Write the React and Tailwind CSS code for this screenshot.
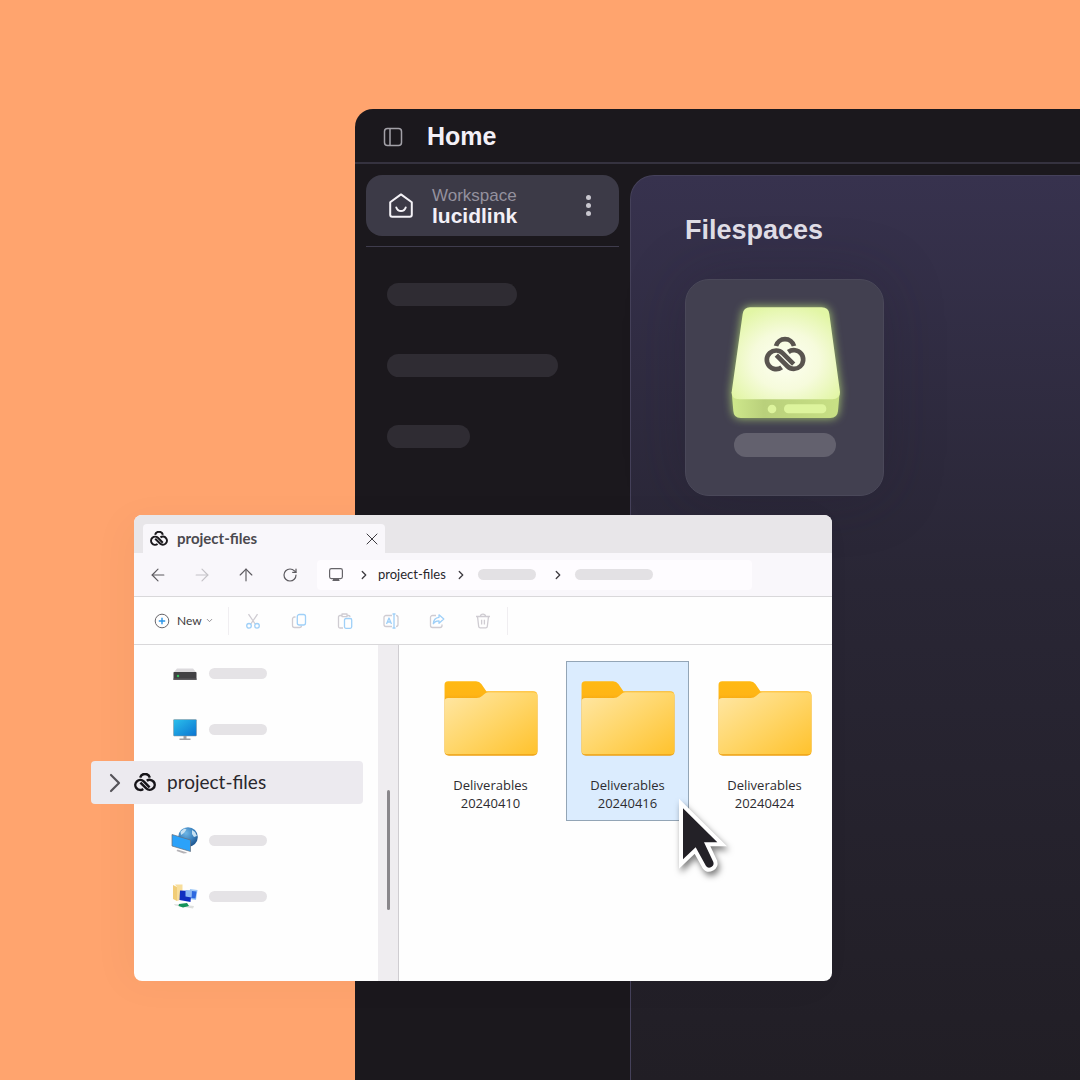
import React from "react";
import { ArrowLeft, ArrowRight, ArrowUp, ChevronDown, ChevronRight, RotateCw, X } from "lucide-react";

const FOLDERS = [
  { name: "Deliverables", date: "20240410" },
  { name: "Deliverables", date: "20240416", selected: true },
  { name: "Deliverables", date: "20240424" },
];

function LogoPaths() {
  return (
    <>
      <path d="M34 25A28 28 0 0 1 88 25" />
      <path d="M51 89A28 28 0 1 1 53.8 46.2L87 79.4" />
      <path d="M71 43A28 28 0 1 1 68.2 85.8L35 52.6" />
    </>
  );
}

function LucidLogo({ className }) {
  return (
    <svg viewBox="-1 -1 124 103" className={className} fill="none" stroke="currentColor" strokeWidth="14" aria-hidden="true">
      <LogoPaths />
    </svg>
  );
}

function PanelIcon() {
  return (
    <svg viewBox="0 0 20 20" className="size-5" fill="none" stroke="#a3a1a8" strokeWidth="1.5" aria-hidden="true">
      <rect x="1.5" y="1.5" width="17" height="17" rx="3" />
      <path d="M7 1.5v17" />
    </svg>
  );
}

function HomeIcon() {
  return (
    <svg viewBox="0 0 24 26" className="h-[26px] w-6" fill="none" stroke="#f4f2f7" strokeWidth="2" strokeLinecap="round" strokeLinejoin="round" aria-hidden="true">
      <path d="M1.2 9.2 12 1.4l10.800 7.800v12.600a2 2 0 0 1-2 2H3.200a2 2 0 0 1-2-2Z" />
      <path d="M7.300 14.500c.8 2.400 2.500 3.500 4.700 3.500s3.900-1.100 4.700-3.500" />
    </svg>
  );
}

function DriveArt() {
  return (
    <svg viewBox="0 0 360 360" className="size-[120px] overflow-visible drop-shadow-[0_0_5px_#c3ee7acc]" aria-hidden="true">
      <defs>
        <radialGradient id="driveTop" cx="50%" cy="58%" r="62%">
          <stop offset="0" stopColor="#fdfff2" />
          <stop offset="0.5" stopColor="#f6fbdc" />
          <stop offset="1" stopColor="#e2f6a5" />
        </radialGradient>
        <linearGradient id="driveFront" x1="0" x2="1" y1="0" y2="0">
          <stop offset="0" stopColor="#cfe88c" />
          <stop offset="0.3" stopColor="#b9d07b" />
          <stop offset="1" stopColor="#c8e085" />
        </linearGradient>
      </defs>
      <path d="M20 270H344L339 327Q337 348 316 348H47Q26 348 25 327Z" fill="url(#driveFront)" />
      <path d="M75 16H290Q311 16 313 36L345 270Q345 292 322 292H43Q19 292 20 270L53 36Q56 16 75 16Z" fill="url(#driveTop)" />
      <circle cx="141" cy="321" r="13" fill="#ddf49d" />
      <rect x="177" y="307" width="127" height="27" rx="13" fill="#ddf49d" />
      <g transform="translate(119 107)" fill="none" stroke="#59544f" strokeWidth="14">
        <LogoPaths />
      </g>
    </svg>
  );
}

function FolderArt() {
  return (
    <svg viewBox="0 0 282 226" className="h-[75px] w-[94px]" aria-hidden="true">
      <defs>
        <linearGradient id="folderFront" x1="0" y1="0" x2="1" y2="1">
          <stop offset="0" stopColor="#ffe7a6" />
          <stop offset="0.5" stopColor="#ffd669" />
          <stop offset="1" stopColor="#ffc22d" />
        </linearGradient>
        <linearGradient id="folderTab" x1="0" y1="0" x2="0" y2="1">
          <stop offset="0" stopColor="#ffb912" />
          <stop offset="0.18" stopColor="#ffb515" />
          <stop offset="0.3" stopColor="#eda012" />
        </linearGradient>
      </defs>
      <path d="M12 1H96Q106 1 112 9L127 31H268Q281 31 281 44V212Q281 225 268 225H14Q1 225 1 212V12Q1 1 12 1Z" fill="url(#folderTab)" />
      <path d="M1 62Q1 51 12 51H98Q108 51 114 45L124 37Q128 34 134 34H270Q281 34 281 45V210Q281 221 270 221H12Q1 221 1 210Z" fill="url(#folderFront)" />
    </svg>
  );
}

function CursorArt() {
  return (
    <svg viewBox="0 0 180 240" className="h-20 w-[60px] overflow-visible drop-shadow-[2px_4px_3px_#00000080]" aria-hidden="true">
      <path
        d="M24 40 127 142H87L115 201Q118 211 109 216 99 221 93 213L62 157 24 193Z"
        fill="#232127"
        stroke="#fff"
        strokeWidth="24"
        paintOrder="stroke"
      />
    </svg>
  );
}

function ComputerIcon() {
  return (
    <svg viewBox="0 0 16 16" className="size-4" fill="none" stroke="#666469" strokeWidth="1.200" aria-hidden="true">
      <rect x="1.600" y="1.600" width="12.800" height="10" rx="1.800" />
      <path d="M4.500 13.500h7M5 12.500h6" />
    </svg>
  );
}

function NewIcon() {
  return (
    <svg viewBox="0 0 16 16" className="size-4" fill="none" aria-hidden="true">
      <circle cx="8" cy="8" r="6.800" stroke="#68666b" />
      <path d="M8 4.800v6.400M4.800 8h6.400" stroke="#2b95e8" strokeWidth="1.400" />
    </svg>
  );
}

const TOOLS = [
  {
    label: "Cut",
    art: (
      <>
        <path d="M3.500 1.200 10.200 11M12.500 1.200 5.800 11" stroke="#cfccd2" />
        <circle cx="4" cy="12.800" r="2.300" stroke="#9fd0f8" />
        <circle cx="12" cy="12.800" r="2.300" stroke="#9fd0f8" />
      </>
    ),
  },
  {
    label: "Copy",
    art: (
      <>
        <path d="M4.500 4H3.500A2 2 0 0 0 1.500 6v6.500a2 2 0 0 0 2 2H8.500a2 2 0 0 0 2-2" stroke="#cfccd2" />
        <rect x="6.300" y="1.500" width="8.200" height="10.500" rx="2" stroke="#9fd0f8" />
      </>
    ),
  },
  {
    label: "Paste",
    art: (
      <>
        <path d="M5 2.500H3A1.500 1.500 0 0 0 1.500 4v9.500A1.500 1.500 0 0 0 3 15h3M10 2.500h1.500A1.500 1.500 0 0 1 13 4M5 1h5v2.600H5Z" stroke="#cfccd2" />
        <rect x="7.500" y="5.500" width="7.200" height="9.800" rx="1.500" stroke="#9fd0f8" />
      </>
    ),
  },
  {
    label: "Rename",
    art: (
      <>
        <path d="M9 2.500H3A2 2 0 0 0 1 4.500v7a2 2 0 0 0 2 2h6M13 2.500a2 2 0 0 1 2 2v7a2 2 0 0 1-2 2" stroke="#cfccd2" />
        <path d="m3.500 11 2.500-6 2.500 6M4.400 9h3.200M11 1v14M9.500 1h3M9.500 15h3" stroke="#9fd0f8" />
      </>
    ),
  },
  {
    label: "Share",
    art: (
      <>
        <path d="M7 2.500H3.500a2 2 0 0 0-2 2V12.500a2 2 0 0 0 2 2H11a2 2 0 0 0 2-2V11.500" stroke="#cfccd2" />
        <path d="M10 1.800 14.800 6 10 10.200V7.800C7.200 7.700 5.500 8.700 4.300 10.800 4.500 7 6.500 4.600 10 4.300Z" stroke="#9fd0f8" />
      </>
    ),
  },
  {
    label: "Delete",
    art: (
      <path d="M1 3.500h14M2.500 3.500l1.200 10a1.600 1.600 0 0 0 1.600 1.400h5.400a1.600 1.600 0 0 0 1.600-1.400l1.200-10M5.500 3.200a2.500 2 0 0 1 5 0M6.600 6.800v4.700M9.400 6.800v4.700" stroke="#cfccd2" />
    ),
  },
];

function DiskIcon() {
  return (
    <svg viewBox="0 0 28 28" className="size-7" aria-hidden="true">
      <path d="M6 9.500h16l3.300 4H2.700Z" fill="#dcdadd" />
      <rect x="2.500" y="13" width="23" height="8" rx="0.800" fill="#424144" />
      <path d="M2.500 19.500h23v1.500h-23Z" fill="#5c5b5e" />
      <circle cx="7" cy="17" r="1.200" fill="#2fc45a" />
    </svg>
  );
}

function MonitorIcon() {
  return (
    <svg viewBox="0 0 28 28" className="size-7" aria-hidden="true">
      <defs>
        <linearGradient id="screen" x1="0" y1="0" x2="1" y2="1">
          <stop offset="0" stopColor="#2bc0ec" />
          <stop offset="1" stopColor="#0b74d1" />
        </linearGradient>
      </defs>
      <rect x="2.500" y="4.500" width="23" height="16.500" rx="0.800" fill="url(#screen)" stroke="#8c9297" strokeWidth="0.500" />
      <path d="M12.500 21h3v2.500h4V25h-11v-1.500h4Z" fill="#a1a0a4" />
    </svg>
  );
}

function NetworkIcon() {
  return (
    <svg viewBox="0 0 28 28" className="size-7" aria-hidden="true">
      <defs>
        <radialGradient id="globe" cx="40%" cy="30%" r="70%">
          <stop offset="0" stopColor="#6db6e6" />
          <stop offset="0.600" stopColor="#3a80bd" />
          <stop offset="1" stopColor="#1e5791" />
        </radialGradient>
      </defs>
      <circle cx="17" cy="11" r="9.800" fill="url(#globe)" />
      <path d="M9.500 5.500l4-3 2 1-2.500 3.500-3 2ZM21 4l3 2 2 4-3 1-2-3Z" fill="#c6e1f2" />
      <path d="M1 8.500 19.500 14v11.500L1 20Z" fill="#2ba2fa" stroke="#686f78" strokeWidth="0.700" />
      <path d="m6.500 23.500 8 2.500 2 1-4 .5-7-2.500Z" fill="#b5b3b7" />
    </svg>
  );
}

function SharedIcon() {
  return (
    <svg viewBox="0 0 28 28" className="size-7" aria-hidden="true">
      <path d="M2 3l4 2v14l-4-2Z" fill="#f1cd78" />
      <path d="M4 2.500h7.500V17L6 19V5Z" fill="#f8de9b" />
      <path d="M19 7l7.500 1-1.500 10-7-1Z" fill="#9cc7f7" />
      <path d="M21 9l4.500.5-1 7-4.500-.5Z" fill="#2d69e0" />
      <path d="M9 8.500 20.500 9l-1 11L8.500 18Z" fill="#0f2ec0" />
      <path d="M14.500 8 21 8.500l-.5 7-6-1Z" fill="#8cb9f4" />
      <path d="m3 22 20 2-1 2.500L4 23.500Z" fill="#dddfdd" />
      <path d="m8 22 8-1 2 3-6 1.500L7.500 24Z" fill="#15935a" />
    </svg>
  );
}

function SidebarItem({ icon, label }) {
  return (
    <li>
      <button type="button" aria-label={label} className="flex h-14 items-center gap-2.5 pl-[37px]">
        {icon}
        <span className="h-[11px] w-[58px] rounded-full bg-[#e5e3e6]" />
      </button>
    </li>
  );
}

function AppWindow() {
  return (
    <div className="flex flex-1 flex-col rounded-tl-[18px] bg-[#1b181d] font-['Liberation_Sans',sans-serif]">
      <header className="flex h-[55px] items-center gap-6 border-b-2 border-[#35323f] pt-0.5 pl-7">
        <button type="button" aria-label="Toggle sidebar">
          <PanelIcon />
        </button>
        <h1 className="text-[25px] font-bold text-[#f3f0f7]">Home</h1>
      </header>

      <div className="flex flex-1 gap-[11px] pt-[11px] pl-[11px]">
        <nav className="w-[253px]">
          <div className="flex h-[61px] items-center rounded-2xl bg-[#3c3a47] pr-[21px] pl-[23px]">
            <HomeIcon />
            <div className="ml-[19px] flex-1">
              <p className="text-[17px] leading-5 text-[#94919e]">Workspace</p>
              <p className="text-[21px] leading-5 font-bold text-[#f3f0f7]">lucidlink</p>
            </div>
            <button type="button" aria-label="Workspace menu" className="flex w-5 flex-col items-center gap-[3px]">
              <span className="size-[5px] rounded-full bg-[#c9c7cf]" />
              <span className="size-[5px] rounded-full bg-[#c9c7cf]" />
              <span className="size-[5px] rounded-full bg-[#c9c7cf]" />
            </button>
          </div>
          <div className="mt-2.5 border-t border-[#3f3c4d] pt-9 pl-[21px]">
            <div className="h-[23px] w-[130px] rounded-full bg-[#2f2c33]" />
            <div className="mt-12 h-[23px] w-[171px] rounded-full bg-[#2f2c33]" />
            <div className="mt-12 h-[23px] w-[83px] rounded-full bg-[#2f2c33]" />
          </div>
        </nav>

        <main className="flex-1 rounded-tl-3xl border-t border-l border-[#45415a] bg-linear-to-b from-[#37324e] via-[#292635] via-45% to-[#211e25] pt-[38px] pl-[54px]">
          <h2 className="text-[27px] leading-8 font-bold text-[#dfdce5]">Filespaces</h2>
          <div className="mt-[33px] flex h-[217px] w-[199px] flex-col items-center rounded-3xl border border-[#4a4859] bg-[#424050] pt-[22px] shadow-[0_0_60px_#1f1b2a40]">
            <DriveArt />
            <div className="mt-[11px] h-6 w-[102px] rounded-full bg-[#63616e]" />
          </div>
        </main>
      </div>
    </div>
  );
}

function Explorer() {
  return (
    <section className="absolute top-[515px] right-[248px] left-[134px] rounded-lg bg-[#fefefe] font-['Lato',sans-serif] text-[#3d3b40] shadow-[-10px_4px_40px_#00000008]">
      <div className="flex h-[38px] items-end rounded-t-lg bg-[#e8e6e9] pl-[9px]">
        <div className="flex h-[29px] w-[242px] items-center rounded-t bg-[#f9f7fb] pr-[3px] pl-[7px]">
          <LucidLogo className="w-[18px] text-[#1b191d]" />
          <span className="ml-[9px] flex-1 text-[15px] font-bold text-[#4b494e]">project-files</span>
          <button type="button" aria-label="Close tab">
            <X size={20} strokeWidth={1.2} />
          </button>
        </div>
      </div>

      <div className="flex h-11 items-center gap-[17px] border-b border-[#d9d8da] bg-[#f9f7fb] pl-3.5">
        <div className="flex gap-6 text-[#5c5a5f]">
          <button type="button" aria-label="Back"><ArrowLeft size={20} strokeWidth={1.4} /></button>
          <button type="button" aria-label="Forward" className="text-[#c4c2c7]"><ArrowRight size={20} strokeWidth={1.4} /></button>
          <button type="button" aria-label="Up"><ArrowUp size={20} strokeWidth={1.4} /></button>
          <button type="button" aria-label="Refresh" className="flex w-5 items-center justify-center">
            <RotateCw size={16} strokeWidth={1.8} />
          </button>
        </div>
        <div className="mr-20 flex h-[30px] flex-1 items-center rounded bg-[#fefcff] pl-[11px]">
          <ComputerIcon />
          <ChevronRight size={14} strokeWidth={2.2} className="mr-[7px] ml-[13px]" />
          <span className="text-[13px] text-[#28262b]">project-files</span>
          <ChevronRight size={14} strokeWidth={2.2} className="mr-2.5 ml-2" />
          <span className="h-[11px] w-[58px] rounded-full bg-[#e3e1e4]" />
          <ChevronRight size={14} strokeWidth={2.2} className="mr-2.5 ml-[15px]" />
          <span className="h-[11px] w-[78px] rounded-full bg-[#e3e1e4]" />
        </div>
      </div>

      <div className="flex h-12 items-center border-b border-[#d9d8da] pl-5">
        <button type="button" className="flex items-center">
          <NewIcon />
          <span className="mr-[3px] ml-[7px] text-xs">New</span>
          <ChevronDown size={9} strokeWidth={2.5} className="text-[#8d8b90]" />
        </button>
        <div className="ml-3.5 flex gap-[30px] border-x border-[#f0eef1] px-4 py-1.5">
          {TOOLS.map((tool) => (
            <button key={tool.label} type="button" aria-label={tool.label}>
              <svg viewBox="0 0 16 16" className="size-4" fill="none" strokeWidth="1.300" strokeLinejoin="round">
                {tool.art}
              </svg>
            </button>
          ))}
        </div>
      </div>

      <div className="flex min-h-[336px]">
        <aside className="w-[244px]">
          <ul>
            <SidebarItem icon={<DiskIcon />} label="Local disk" />
            <SidebarItem icon={<MonitorIcon />} label="This PC" />
          </ul>
          <button type="button" className="relative mt-1 -ml-[43px] flex h-[43px] w-[272px] items-center rounded bg-[#eceaef] pl-2">
            <ChevronRight size={32} strokeWidth={1.6} className="text-[#555358]" />
            <LucidLogo className="ml-[3px] w-[22px] text-[#161418]" />
            <span className="ml-[11px] text-[19px] text-[#29272c]">project-files</span>
          </button>
          <ul className="mt-2">
            <SidebarItem icon={<NetworkIcon />} label="Network" />
            <SidebarItem icon={<SharedIcon />} label="Shared folders" />
          </ul>
        </aside>
        <div className="flex w-[21px] justify-center border-r border-[#cfcdd1] bg-[#efedf0] pt-[145px]">
          <div className="h-[120px] w-[3px] rounded-full bg-[#89878b]" />
        </div>

        <div className="flex flex-1 items-start gap-[14px] pt-4 pl-[30px]">
          {FOLDERS.map((folder) => (
            <button
              key={folder.date}
              type="button"
              className={
                folder.selected
                  ? "relative flex h-40 w-[123px] flex-col items-center border border-[#93a5b6] bg-[#dbecfe] pt-[19px]"
                  : "relative flex h-40 w-[123px] flex-col items-center border border-transparent pt-[19px]"
              }
            >
              <FolderArt />
              <span className="mt-5 font-['Open_Sans',sans-serif] text-[13px] leading-[18px] text-[#2d2c30]">
                {folder.name}
                <br />
                {folder.date}
              </span>
              {folder.selected && (
                <span className="pointer-events-none absolute top-[133px] left-[108px] z-10">
                  <CursorArt />
                </span>
              )}
            </button>
          ))}
        </div>
      </div>
    </section>
  );
}

export default function App() {
  return (
    <div className="relative flex min-h-screen overflow-hidden bg-[#ffa46e] pt-[109px] pl-[355px]">
      <AppWindow />
      <Explorer />
    </div>
  );
}
